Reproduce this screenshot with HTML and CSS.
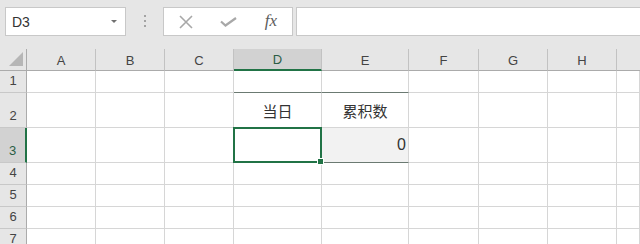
FILE: index.html
```html
<html lang="zh">

<head>
    <meta charset="UTF-8">
    <meta name="viewport" content="width=device-width, initial-scale=1.0">
    <title>Sheet</title>
    <link rel="stylesheet" href="styles.css">
</head>

<body>

    <div class="toolbar">
        <div class="namebox">
            <span>D3</span>
            <span class="caret"></span>
        </div>
        <div class="grip"><i></i><i></i><i></i></div>
        <div class="fxbox">
            <span class="btn">
                <svg width="14" height="14" viewBox="0 0 14 14"><path d="M1 1 L13 13 M13 1 L1 13" stroke="#a8a8a8" stroke-width="1.6" fill="none"/></svg>
            </span>
            <span class="btn">
                <svg width="17" height="10" viewBox="0 0 17 10"><path d="M1 4.5 L5.5 8.5 L16 1" stroke="#a8a8a8" stroke-width="2.2" fill="none"/></svg>
            </span>
            <span class="btn fx">fx</span>
        </div>
        <div class="formula"></div>
    </div>

    <div class="sheet">
        <!-- header row -->
        <div class="corner"><div class="tri"></div></div>
        <div class="ch">A</div>
        <div class="ch">B</div>
        <div class="ch">C</div>
        <div class="ch sel">D</div>
        <div class="ch">E</div>
        <div class="ch">F</div>
        <div class="ch">G</div>
        <div class="ch">H</div>
        <div class="ch last"></div>

        <!-- row 1 -->
        <div class="rh">1</div>
        <div class="c"></div><div class="c"></div><div class="c"></div>
        <div class="c bb"></div><div class="c bb"></div>
        <div class="c"></div><div class="c"></div><div class="c"></div><div class="c"></div>

        <!-- row 2 -->
        <div class="rh">2</div>
        <div class="c"></div><div class="c"></div><div class="c"></div>
        <div class="c label">当日</div><div class="c label">累积数</div>
        <div class="c"></div><div class="c"></div><div class="c"></div><div class="c"></div>

        <!-- row 3 -->
        <div class="rh sel-row">3</div>
        <div class="c"></div><div class="c"></div><div class="c"></div>
        <div class="c bb active"></div><div class="c bb shade num">0</div>
        <div class="c"></div><div class="c"></div><div class="c"></div><div class="c"></div>

        <!-- row 4 -->
        <div class="rh">4</div>
        <div class="c"></div><div class="c"></div><div class="c"></div><div class="c"></div><div class="c"></div>
        <div class="c"></div><div class="c"></div><div class="c"></div><div class="c"></div>

        <!-- row 5 -->
        <div class="rh">5</div>
        <div class="c"></div><div class="c"></div><div class="c"></div><div class="c"></div><div class="c"></div>
        <div class="c"></div><div class="c"></div><div class="c"></div><div class="c"></div>

        <!-- row 6 -->
        <div class="rh">6</div>
        <div class="c"></div><div class="c"></div><div class="c"></div><div class="c"></div><div class="c"></div>
        <div class="c"></div><div class="c"></div><div class="c"></div><div class="c"></div>

        <!-- row 7 -->
        <div class="rh">7</div>
        <div class="c"></div><div class="c"></div><div class="c"></div><div class="c"></div><div class="c"></div>
        <div class="c"></div><div class="c"></div><div class="c"></div><div class="c"></div>
    </div>

</body>

</html>
```

FILE: styles.css
```css
body {
    margin: 0;
    overflow: hidden;
    background: white;
    font-family: "Liberation Sans", Arial, sans-serif;
}

/* formula bar */
.toolbar {
    display: flex;
    align-items: flex-start;
    height: 49px;
    box-sizing: border-box;
    padding: 7px 0 0 5px;
    background: #e6e6e6;
}

.namebox {
    display: flex;
    align-items: center;
    width: 121px;
    height: 29px;
    box-sizing: border-box;
    padding-left: 6px;
    background: white;
    border: 1px solid #c8c8c8;
    font-size: 14px;
    color: #333;
}
.caret {
    margin-left: auto;
    margin-right: 8px;
    width: 0;
    height: 0;
    border-left: 3px solid transparent;
    border-right: 3px solid transparent;
    border-top: 3px solid #707070;
}

.grip {
    width: 37px;
    display: flex;
    flex-direction: column;
    align-items: center;
    gap: 3px;
    padding-top: 8px;
}
.grip i {
    width: 2px;
    height: 2px;
    background: #a3a3a3;
}

.fxbox {
    display: flex;
    width: 130px;
    height: 29px;
    box-sizing: border-box;
    background: white;
    border: 1px solid #c8c8c8;
}
.btn {
    width: 43px;
    display: flex;
    align-items: center;
    justify-content: center;
}
.fx {
    width: 42px;
    font-family: "Liberation Serif", serif;
    font-style: italic;
    font-size: 17px;
    color: #5c5c5c;
    padding-bottom: 2px;
    box-sizing: border-box;
}

.formula {
    flex: 1;
    height: 29px;
    margin-left: 3px;
    box-sizing: border-box;
    background: white;
    border: 1px solid #c8c8c8;
    border-right: none;
}

/* grid */
.sheet {
    display: grid;
    grid-template-columns: 27px 69px 69px 69px 88px 87px 70px 69px 69px 1fr;
    grid-template-rows: 22px 22px 35px 35px 22px 22px 22px 22px;
}
.sheet > div {
    box-sizing: border-box;
}

.corner {
    display: flex;
    justify-content: flex-end;
    align-items: flex-end;
    padding: 0 3px 4px 0;
    background: #e6e6e6;
    border-right: 1px solid #ababab;
    border-bottom: 1px solid #ababab;
}
.tri {
    width: 14px;
    height: 14px;
    background: #b6b6b6;
    clip-path: polygon(100% 0, 100% 100%, 0 100%);
}

.ch {
    display: flex;
    align-items: center;
    justify-content: center;
    background: #e6e6e6;
    border-right: 1px solid #c2c2c2;
    border-bottom: 1px solid #ababab;
    font-size: 13px;
    color: #444;
    padding-top: 1px;
}
.ch.last {
    border-right: none;
}
.ch.sel {
    background: #d2d2d2;
    border-bottom: 2px solid #217346;
    color: #2b5d45;
}

.rh {
    display: flex;
    align-items: flex-end;
    justify-content: center;
    padding-bottom: 4px;
    background: #e6e6e6;
    border-right: 1px solid #ababab;
    border-bottom: 1px solid #c8c8c8;
    font-size: 13px;
    color: #444;
}
.rh.sel-row {
    background: #d2d2d2;
    border-right: 2px solid #217346;
    color: #2b5d45;
}

.c {
    border-right: 1px solid #d6d6d6;
    border-bottom: 1px solid #d6d6d6;
}
.c.bb {
    border-bottom-color: #6b7a72;
}

.label {
    display: flex;
    align-items: center;
    justify-content: center;
    font-family: "Noto Sans CJK SC", sans-serif;
    font-size: 15px;
    color: #333;
}

.shade {
    background: #f2f2f2;
}
.num {
    display: flex;
    align-items: center;
    justify-content: flex-end;
    padding-right: 2px;
    font-size: 16px;
    color: #333;
}

.active {
    position: relative;
    z-index: 2;
}
.active::before {
    content: "";
    position: absolute;
    inset: -1px;
    border: 2px solid #217346;
}
.active::after {
    content: "";
    position: absolute;
    right: -2px;
    bottom: -2px;
    width: 5px;
    height: 5px;
    background: #217346;
    box-shadow: 0 0 0 1px white;
}
```
